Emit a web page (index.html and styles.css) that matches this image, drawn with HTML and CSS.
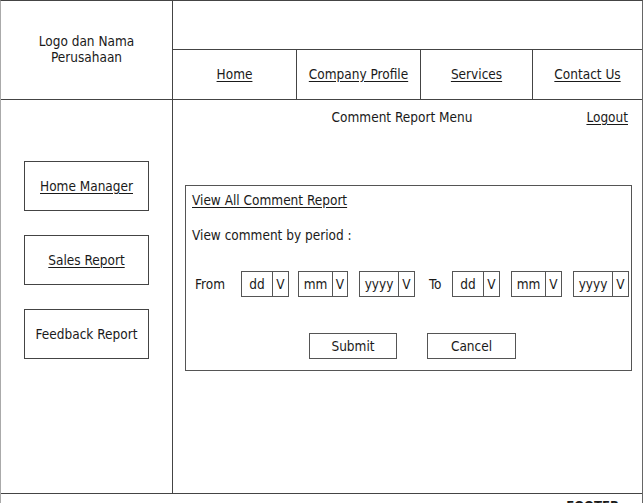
FILE: index.html
```html
<!DOCTYPE html>
<html>
<head>
<meta charset="utf-8">
<link rel="stylesheet" href="styles.css">
</head>
<body>
<div class="page">
  <header class="header">
    <div class="logo">Logo dan Nama<br>Perusahaan</div>
    <div class="header-right">
      <div class="header-top"></div>
      <nav class="nav">
        <a class="nav-item w1">Home</a>
        <a class="nav-item w2">Company Profile</a>
        <a class="nav-item w3">Services</a>
        <a class="nav-item w4">Contact Us</a>
      </nav>
    </div>
  </header>
  <div class="main">
    <aside class="sidebar">
      <a class="side-btn link">Home Manager</a>
      <a class="side-btn link">Sales Report</a>
      <div class="side-btn">Feedback Report</div>
    </aside>
    <section class="content">
      <div class="title-row">
        <span></span>
        <span class="title">Comment Report Menu</span>
        <a class="logout">Logout</a>
      </div>
      <div class="panel">
        <a class="view-all">View All Comment Report</a>
        <div class="period">View comment by period :</div>
        <div class="date-row">
          <span class="lbl from">From</span>
          <span class="sel s-dd"><span class="val">dd</span><span class="arr">V</span></span>
          <span class="sel s-mm g9"><span class="val">mm</span><span class="arr">V</span></span>
          <span class="sel s-yy g11"><span class="val">yyyy</span><span class="arr">V</span></span>
          <span class="lbl to">To</span>
          <span class="sel s-dd2"><span class="val">dd</span><span class="arr">V</span></span>
          <span class="sel s-mm2 g11"><span class="val">mm</span><span class="arr">V</span></span>
          <span class="sel s-yy g11"><span class="val">yyyy</span><span class="arr">V</span></span>
        </div>
        <div class="buttons">
          <div class="btn b-submit">Submit</div>
          <div class="btn b-cancel">Cancel</div>
        </div>
      </div>
    </section>
  </div>
  <footer class="footer">FOOTER</footer>
</div>
</body>
</html>
```
FILE: styles.css
```css
html, body {
  margin: 0;
  padding: 0;
  background: #fff;
}
body {
  font-family: "DejaVu Sans Condensed", "DejaVu Sans", Tahoma, sans-serif;
  font-size: 13.5px;
  color: #1a1a1a;
  overflow: hidden;
}
a {
  color: #1a1a1a;
  text-decoration: underline;
  text-underline-offset: 2px;
}
.page {
  width: 643px;
  height: 503px;
  box-sizing: border-box;
  border-top: 1px solid #444;
  border-left: 1px solid #aaa;
  border-right: 1px solid #666;
  display: flex;
  flex-direction: column;
  overflow: hidden;
}
.header {
  flex-shrink: 0;
  display: grid;
  grid-template-columns: 172px 1fr;
  height: 98px;
  border-bottom: 1px solid #444;
}
.logo {
  border-right: 1px solid #444;
  display: flex;
  align-items: center;
  justify-content: center;
  text-align: center;
  line-height: 16px;
  padding-bottom: 3px;
}
.header-right {
  display: flex;
  flex-direction: column;
}
.header-top {
  height: 48px;
  border-bottom: 1px solid #444;
}
.nav {
  flex: 1;
  display: flex;
}
.nav-item {
  display: flex;
  align-items: center;
  justify-content: center;
  border-right: 1px solid #444;
  padding-bottom: 1px;
}
.w1 { width: 123px; }
.w2 { width: 123px; }
.w3 { width: 111px; }
.w4 { flex: 1; border-right: none; }

.main {
  flex-shrink: 0;
  display: grid;
  grid-template-columns: 172px 1fr;
  height: 393px;
  border-bottom: 1px solid #444;
}
.sidebar {
  border-right: 1px solid #444;
  display: flex;
  flex-direction: column;
  gap: 24px;
  padding: 61px 0 0 23px;
}
.side-btn {
  width: 123px;
  height: 48px;
  border: 1px solid #444;
  display: flex;
  align-items: center;
  justify-content: center;
  box-sizing: content-box;
}
.content {
  display: flex;
  flex-direction: column;
}
.title-row {
  display: grid;
  grid-template-columns: 1fr auto 1fr;
  padding: 7px 14px 0 3px;
  height: 20px;
  align-items: center;
}
.logout {
  justify-self: end;
}
.panel {
  margin: 58px 0 0 12px;
  width: 439px;
  height: 184px;
  border: 1px solid #555;
  display: flex;
  flex-direction: column;
  padding: 0 0 0 6px;
  box-sizing: content-box;
}
.view-all {
  margin-top: 5px;
  height: 18px;
  line-height: 18px;
}
.period {
  margin-top: 17px;
  height: 18px;
  line-height: 18px;
}
.date-row {
  margin-top: 27px;
  display: flex;
  align-items: center;
  height: 26px;
}
.lbl.from { margin-left: 3px; width: 46px; }
.lbl.to { margin-left: 14px; width: 23px; }
.sel {
  display: flex;
  height: 24px;
  border: 1px solid #555;
  box-sizing: content-box;
}
.sel .val {
  display: flex;
  align-items: center;
  justify-content: center;
  border-right: 1px solid #555;
}
.sel .arr {
  flex: 1;
  display: flex;
  align-items: center;
  justify-content: center;
}
.s-dd { width: 46px; }
.s-dd .val { width: 30px; }
.s-dd2 { width: 46px; }
.s-dd2 .val { width: 30px; }
.s-mm { width: 48px; }
.s-mm .val { width: 33px; }
.s-mm2 { width: 49px; }
.s-mm2 .val { width: 33px; }
.s-yy { width: 54px; }
.s-yy .val { width: 38px; }
.g9 { margin-left: 9px; }
.g11 { margin-left: 11px; }

.buttons {
  margin-top: 36px;
  display: flex;
  gap: 30px;
  padding-left: 117px;
}
.btn {
  height: 24px;
  border: 1px solid #555;
  display: flex;
  align-items: center;
  justify-content: center;
  box-sizing: content-box;
}
.b-submit { width: 86px; }
.b-cancel { width: 87px; }

.footer {
  flex-shrink: 0;
  text-align: right;
  padding-right: 23px;
  font-size: 13px;
  font-weight: bold;
  line-height: 14px;
  padding-top: 5px;
}
```
